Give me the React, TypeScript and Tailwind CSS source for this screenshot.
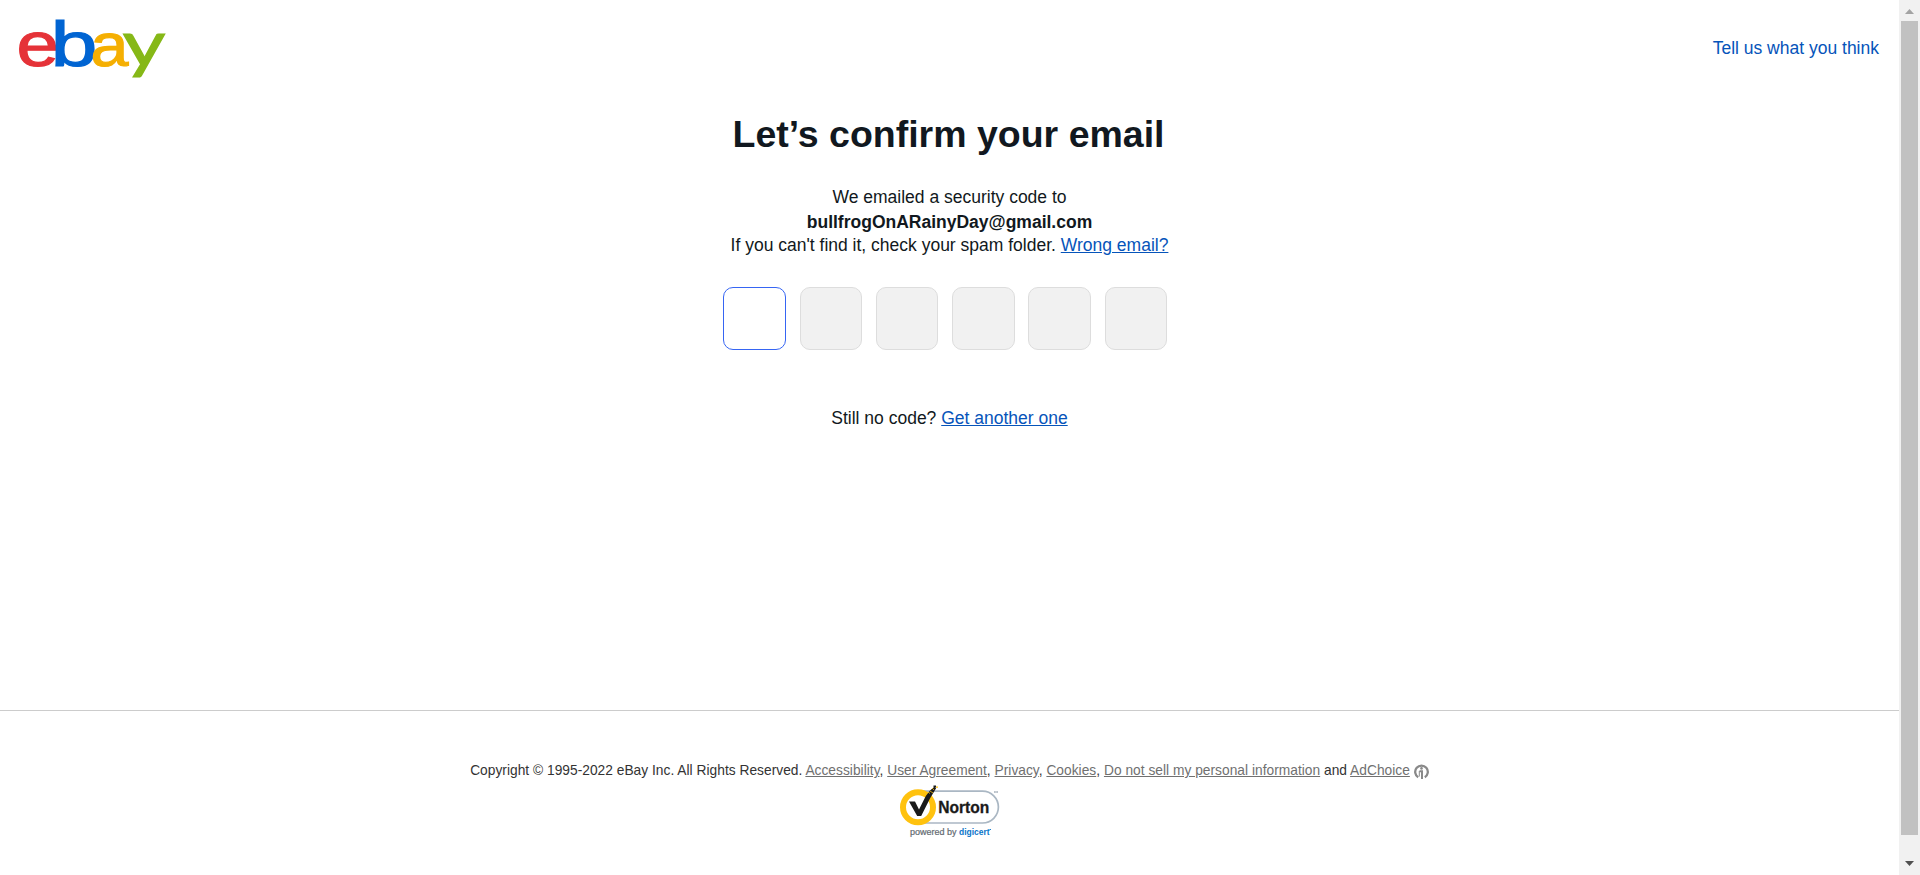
import type { ReactNode } from "react";

const slots = [0, 1, 2, 3, 4, 5];

function EbayLogo() {
  return (
    <svg width="150" height="70" viewBox="16 13 150 70" fontFamily="'Liberation Sans', Arial, sans-serif" fontSize="62" strokeWidth="1.2" role="img" aria-label="eBay">
      <text transform="translate(16.4 66.2) scale(1.23 1)" fill="#e53238" stroke="#e53238">e</text>
      <text transform="translate(50.8 66.2) scale(1.35 1.01)" fill="#0064d2" stroke="#0064d2">b</text>
      <text transform="translate(90.6 66.2) scale(1.1 1)" fill="#f5af02" stroke="#f5af02">a</text>
      <text transform="translate(122.8 66.4) scale(1.25 0.98)" fontFamily="Lato, sans-serif" fontSize="66" fill="#86b817" stroke="#86b817">y</text>
    </svg>
  );
}

function NortonSeal() {
  return (
    <svg width="104" height="58" viewBox="0 0 104 58" fontFamily="'Liberation Sans', Arial, sans-serif" role="img" aria-label="Norton powered by digicert">
      <path d="M20 8.2H83.5a15.6 15.6 0 0 1 0 31.8H20" fill="none" stroke="#aab7c3" strokeWidth="1.7" />
      <circle cx="19" cy="24.3" r="15" fill="#fff" stroke="#ffc20e" strokeWidth="6" />
      <path d="M10 18.500h6l4 8 6.800-13.500L31 7.500l4.500-3.700 1.600 1.500-6 10L22.200 33h-4z" fill="#1a1a1a" />
      <path d="M29 9l2 1.500M33 5l2 2M31 8l3 2" stroke="#ffc20e" strokeWidth="0.800" />
      <path d="M37 3.500h2v1.300h-2z" fill="#ffc20e" />
      <path d="M34.500 2.500H37v2h-2.500z" fill="#1a1a1a" />
      <text x="39.300" y="30" fontSize="16" fontWeight="700" fill="#1a1a1a" stroke="#1a1a1a" strokeWidth=".3" textLength="51" lengthAdjust="spacingAndGlyphs">Norton</text>
      <path d="M95 9h4" stroke="#a5b0ba" strokeWidth="1.500" strokeDasharray="1.800 .4" />
      <text x="11" y="52" fontSize="9" fill="#626a70" stroke="#626a70" strokeWidth=".2" textLength="46.500" lengthAdjust="spacingAndGlyphs">powered by</text>
      <text x="60" y="52" fontSize="9" fontWeight="700" fill="#0874c9" textLength="30.500" lengthAdjust="spacingAndGlyphs">digicert</text>
      <path d="M90.500 46.500h1.400" stroke="#0874c9" />
    </svg>
  );
}

function AdChoiceIcon() {
  return (
    <svg className="ml-[4px] mt-px shrink-0" width="15" height="16" viewBox="0 0 15 16">
      <path d="M4.200 13.200A6.300 6.300 0 1 1 10.800 13.200" fill="none" stroke="#898989" strokeWidth="2.300" />
      <circle cx="7.500" cy="4.400" r="1.300" fill="#898989" />
      <path d="M5.500 7.200H8V15" fill="none" stroke="#898989" strokeWidth="2" />
      <path d="M5.300 7V12.500" fill="none" stroke="#898989" />
    </svg>
  );
}

function FooterLink({ children }: { children: ReactNode }) {
  return <a href="#" className="text-[#707070] underline">{children}</a>;
}

export default function App() {
  return (
    <div className="flex h-[875px] w-full overflow-hidden bg-white font-['Liberation_Sans',Arial,sans-serif] text-[17.5px] text-[#111820]">
      <div className="flex min-w-0 flex-1 flex-col">
        <header className="flex h-24 items-center justify-between pl-4 pr-5">
          <EbayLogo />
          <a href="#" className="text-[#0654ba]">Tell us what you think</a>
        </header>

        <main className="flex h-[615px] flex-col items-center border-b border-[#ccc] pt-[15px]">
          <h1 className="mr-[2px] h-[46px] text-[37.5px] leading-[46px] font-bold">Let’s confirm your email</h1>
          <div className="mt-7 text-center">
            <p className="h-[25px] leading-6">We emailed a security code to</p>
            <p className="h-6 leading-[25px] font-bold">bullfrogOnARainyDay@gmail.com</p>
            <p className="h-[23px] leading-[23px]">
              If you can't find it, check your spam folder.{" "}
              <a href="#" className="text-[#0654ba] underline">Wrong email?</a>
            </p>
          </div>
          <div className="mt-[30px] mr-[8.75px] flex gap-[13.75px]">
            {slots.map((slot) => (
              <input
                key={slot}
                aria-label={`Digit ${slot + 1}`}
                disabled={slot > 0}
                className="size-[62.5px] rounded-[10px] border border-[#3665f3] bg-white text-center outline-none disabled:border-[#ddd] disabled:bg-[#f1f1f1]"
              />
            ))}
          </div>
          <p className="mt-[56.5px] h-6 leading-6">
            Still no code? <a href="#" className="text-[#0654ba] underline">Get another one</a>
          </p>
        </main>

        <footer className="flex flex-col items-center pt-[50px] text-[13.75px] tracking-[0.02px] text-[#333]">
          <div className="flex h-5 items-center leading-5">
            <p className="whitespace-nowrap">
              Copyright © 1995-2022 eBay Inc. All Rights Reserved. <FooterLink>Accessibility</FooterLink>,{" "}
              <FooterLink>User Agreement</FooterLink>, <FooterLink>Privacy</FooterLink>,{" "}
              <FooterLink>Cookies</FooterLink>, <FooterLink>Do not sell my personal information</FooterLink> and{" "}
              <FooterLink>AdChoice</FooterLink>
            </p>
            <AdChoiceIcon />
          </div>
          <div className="mt-[2px] ml-[3px] tracking-normal">
            <NortonSeal />
          </div>
        </footer>
      </div>

      <div className="flex w-[21px] shrink-0 flex-col items-center bg-[#f1f1f1]">
        <svg width="21" height="21"><path d="M6 14L10.500 9L15 14z" fill="#a3a3a3" /></svg>
        <div className="h-[814px] w-[17px] bg-[#c1c1c1]" />
        <svg className="mt-[19px]" width="21" height="21"><path d="M6 7L10.500 12L15 7z" fill="#505050" /></svg>
      </div>
    </div>
  );
}
